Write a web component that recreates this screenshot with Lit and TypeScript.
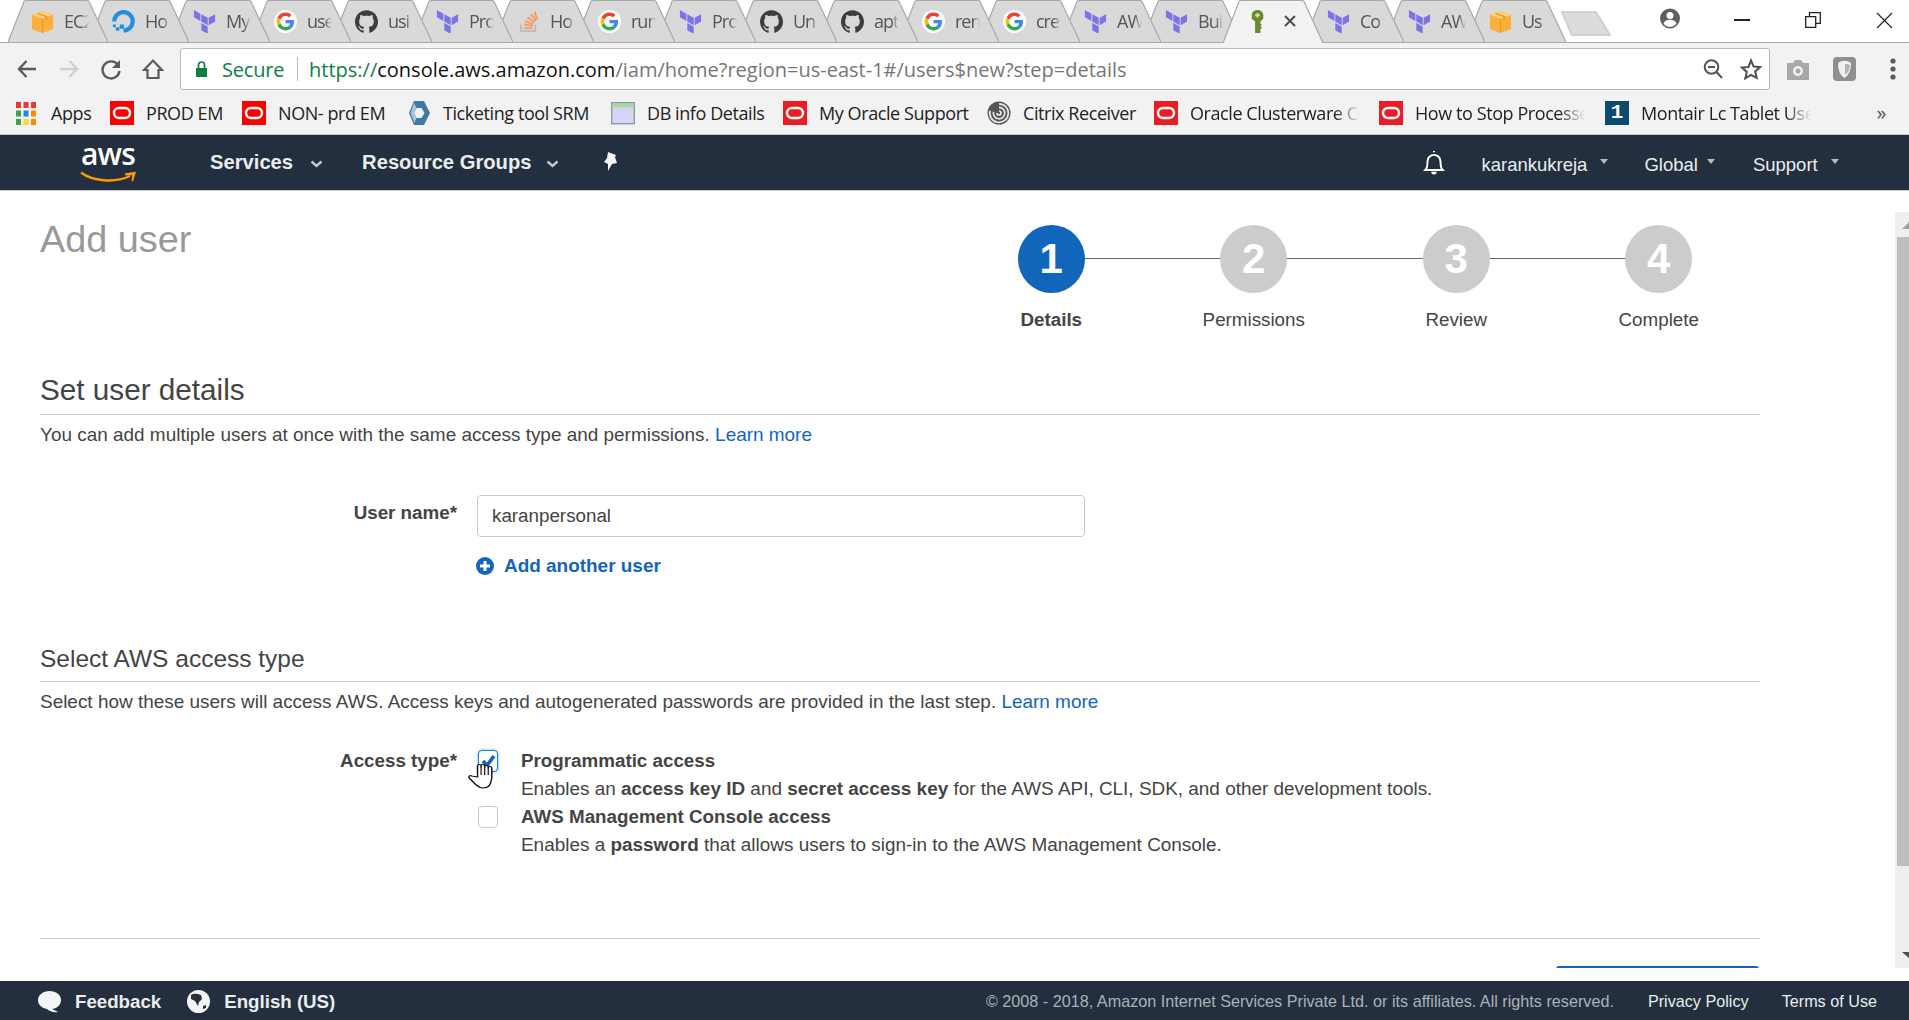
import { LitElement, html, css, svg } from "lit";
import { customElement } from "lit/decorators.js";

const terraform = () => html`<svg class="fav" viewBox="0 0 25 25"><path fill="#7b74e6" d="M1 0v8l7 4V4zM9 4.500v8l7 4v-8zM17 8.500v8l7-4v-8zM9 14v8l7 4v-8z"/></svg>`;
const google = () => html`<svg class="fav" viewBox="-7 -7 62 62"><circle cx="24" cy="24" r="31" fill="#fff"/><path fill="#EA4335" d="M24 9.500c3.540 0 6.710 1.220 9.210 3.600l6.850-6.850C35.900 2.380 30.470 0 24 0 14.620 0 6.510 5.380 2.560 13.220l7.980 6.190C12.430 13.720 17.740 9.500 24 9.500z"/><path fill="#4285F4" d="M46.980 24.550c0-1.570-.15-3.090-.38-4.550H24v9.020h12.940c-.58 2.960-2.260 5.480-4.780 7.180l7.730 6c4.510-4.180 7.090-10.360 7.090-17.650z"/><path fill="#FBBC05" d="M10.530 28.590c-.48-1.450-.76-2.990-.76-4.590s.27-3.140.76-4.590l-7.980-6.190C.92 16.460 0 20.120 0 24c0 3.880.92 7.540 2.560 10.780l7.970-6.190z"/><path fill="#34A853" d="M24 48c6.480 0 11.930-2.130 15.890-5.810l-7.730-6c-2.150 1.450-4.920 2.300-8.160 2.300-6.260 0-11.570-4.220-13.470-9.910l-7.980 6.190C6.510 42.620 14.620 48 24 48z"/></svg>`;
const github = () => html`<svg class="fav" viewBox="0 0 24 24"><path fill="#3d3d3d" d="M12 .297c-6.630 0-12 5.373-12 12 0 5.303 3.438 9.800 8.205 11.385.6.113.82-.258.82-.577 0-.285-.01-1.040-.015-2.040-3.338.724-4.042-1.610-4.042-1.610C4.422 18.070 3.633 17.700 3.633 17.700c-1.087-.744.084-.729.084-.729 1.205.084 1.838 1.236 1.838 1.236 1.070 1.835 2.809 1.305 3.495.998.108-.776.417-1.305.76-1.605-2.665-.3-5.466-1.332-5.466-5.930 0-1.310.465-2.380 1.235-3.220-.135-.303-.54-1.523.105-3.176 0 0 1.005-.322 3.300 1.230.96-.267 1.980-.399 3-.405 1.020.006 2.040.138 3 .405 2.280-1.552 3.285-1.230 3.285-1.230.645 1.653.24 2.873.12 3.176.765.84 1.230 1.910 1.230 3.220 0 4.610-2.805 5.625-5.475 5.920.42.36.81 1.096.81 2.220 0 1.606-.015 2.896-.03 3.286 0 .315.21.69.825.57C20.565 22.092 24 17.592 24 12.297c0-6.627-5.373-12-12-12"/></svg>`;
const awsBox = () => html`<svg class="fav" viewBox="0 0 24 24"><path fill="#fbb03b" d="M12 1 1 5v15l11 4 11-4V5z"/><path fill="#fdd27f" d="M12 1 1 5l11 4 11-4z"/><path fill="#e89a2c" d="M11.400 9h1.200v15h-1.200zM8 3l9 3.600v3l-2 .7V7.400L6 4z"/></svg>`;
const ocean = () => html`<svg class="fav" viewBox="0 0 24 24"><path fill="none" stroke="#1f8fe8" stroke-width="4.400" d="M12 21.400A9.600 9.600 0 1 0 2.400 12"/><path fill="#1f8fe8" d="M8 15h4.500v4.500H8zM4 18h3.600v3.600H4zM1 15h3v3H1z"/></svg>`;
const stack = () => html`<svg class="fav" viewBox="0 0 24 24"><path fill="none" stroke="#bcbbbb" stroke-width="2" d="M4 15v7h15v-7"/><path stroke="#f4a064" stroke-width="2.200" d="M7 19h9M7.400 15.200l9 1.400M8.600 11.400l8.300 3.400M11 7.600l7.400 5.200M14.400 4.400l5.400 7M18.400 2l2.600 8"/></svg>`;
const keyIcon = () => html`<svg class="fav" viewBox="0 0 24 24"><path fill="#6c8a2a" d="M6 5a6 5 0 0 1 12 0v4l-3 3v2l1.600 1.400-1.600 1.400 1.600 1.600-1.600 1.600V24H9.500V12L6 9z"/><path fill="#d6e3a8" d="M11 3h2v1.400h1.400v2H13v1.400h-2V6.400H9.600v-2H11z"/></svg>`;

interface Tab { icon: () => unknown; text: string; active?: boolean }
const tabs: Tab[] = [
  { icon: awsBox, text: "EC2" }, { icon: ocean, text: "Ho" }, { icon: terraform, text: "My" },
  { icon: google, text: "use" }, { icon: github, text: "usi" }, { icon: terraform, text: "Pro" },
  { icon: stack, text: "Ho" }, { icon: google, text: "run" }, { icon: terraform, text: "Pro" },
  { icon: github, text: "Un" }, { icon: github, text: "apt" }, { icon: google, text: "ren" },
  { icon: google, text: "cre" }, { icon: terraform, text: "AW" }, { icon: terraform, text: "Bui" },
  { icon: keyIcon, text: "", active: true }, { icon: terraform, text: "Co" }, { icon: terraform, text: "AW" },
  { icon: awsBox, text: "Us" },
];

const oracle = (bg: string) => html`<svg class="bm-ic" viewBox="0 0 24 24"><rect width="24" height="24" fill=${bg}/><rect x="4" y="7" width="16" height="10" rx="5" fill="none" stroke="#fff" stroke-width="2.400"/></svg>`;
const appsIcon = html`<svg class="bm-ic small" viewBox="0 0 20 24">${[["#e53935","#e53935","#e53935"],["#43a047","#1e88e5","#fb8c00"],["#43a047","#fdd835","#fb8c00"]].map((r, y) => r.map((c, x) => svg`<rect x=${x * 7.5} y=${y * 8.5 + 1} width="5" height="6" fill=${c}/>`))}</svg>`;
const hexIcon = html`<svg class="bm-ic" viewBox="0 0 24 24"><path fill="#3f7ba0" d="M7 0h10l6 12-6 12H7L2 12z"/><path fill="#f2f2f2" d="M9.500 7h5l3 5-3 5h-5l-2.500-5z"/><path fill="#a9c7d9" d="M7 2 3.500 12 7.500 22l2-5-2.500-5 2.500-5z"/></svg>`;
const dbIcon = html`<svg class="bm-ic" viewBox="0 0 24 24"><rect x=".7" y="1.700" width="22.600" height="21" fill="#d5d5f5" stroke="#8f9a9a" stroke-width="1.400"/><rect x="1.400" y="2.400" width="21.200" height="4" fill="#a7d7a2"/></svg>`;
const citrixIcon = html`<svg class="bm-ic" viewBox="0 0 24 24"><circle cx="12" cy="12" r="11.500" fill="#555"/><path fill="none" stroke="#e8e8e8" stroke-width="1.700" d="M12 2.800a9.300 9.300 0 1 1-9 7M12 6.400a5.700 5.700 0 1 1-5.500 4.400M12 10a2 2 0 1 1-2 2"/></svg>`;

const bookmarks = [
  { ic: appsIcon, t: "Apps", x: 16, w: 40 },
  { ic: oracle("#ff0000"), t: "PROD EM", x: 110, w: 76 },
  { ic: oracle("#ff0000"), t: "NON- prd EM", x: 242, w: 109 },
  { ic: hexIcon, t: "Ticketing tool SRM", x: 407, w: 149 },
  { ic: dbIcon, t: "DB info Details", x: 611, w: 116 },
  { ic: oracle("#ed1c24"), t: "My Oracle Support", x: 783, w: 149 },
  { ic: citrixIcon, t: "Citrix Receiver", x: 987, w: 112 },
  { ic: oracle("#ed1c24"), t: "Oracle Clusterware Console", x: 1154, w: 170, fade: true },
  { ic: oracle("#ed1c24"), t: "How to Stop Processes", x: 1379, w: 170, fade: true },
  { ic: html`<span class="montair">1</span>`, t: "Montair Lc Tablet User", x: 1605, w: 170, fade: true },
];

const caret = html`<svg class="chev" viewBox="0 0 12 8"><path fill="none" stroke="#c4c8cc" stroke-width="2.400" d="M1 1.500 6 6l5-4.500"/></svg>`;

@customElement("app-root")
export class AppRoot extends LitElement {
  static styles = css`
    :host { display: flex; flex-direction: column; width: 1909px; height: 1020px; overflow: hidden; background: #fff; font-family: "Liberation Sans", Arial, sans-serif; color: #444; }

    .tabstrip { display: flex; align-items: flex-start; height: 42px; padding-left: 8px; border-bottom: 1px solid #a9a9a9; position: relative; flex: none; z-index: 1; }
    .tab { position: relative; width: 81px; height: 42px; flex: none; display: flex; align-items: center; gap: 10px; padding-left: 23px; box-sizing: border-box; font-family: "Open Sans", sans-serif; font-size: 18px; letter-spacing: -1px; color: #555; }
    .tab > .shape { position: absolute; left: 0; top: 0; width: 100px; height: 43px; }
    .fav { width: 23px; height: 23px; flex: none; position: relative; }
    .tab-t { width: 25px; overflow: hidden; white-space: nowrap; flex: none; position: relative; -webkit-mask-image: linear-gradient(90deg, #000 70%, transparent); mask-image: linear-gradient(90deg, #000 70%, transparent); }
    .tab-x { position: relative; width: 12px; height: 12px; margin-left: 5px; flex: none; }
    .newtab { width: 50px; height: 26px; margin: 10px 0 0 14px; flex: none; }
    .winctl { position: absolute; top: 0; right: 0; height: 42px; display: flex; align-items: flex-start; }
    .profile { width: 20px; height: 21px; margin: 8px 54px 0 0; }
    .wmin { width: 16px; height: 2px; background: #222; margin: 19px 55px 0 0; }
    .wmax { width: 16px; height: 16px; margin: 12px 55px 0 0; }
    .wclose { width: 17px; height: 17px; margin: 12px 16px 0 0; }

    .toolbar { height: 47px; flex: none; background: #f2f2f2; display: flex; align-items: center; box-sizing: border-box; padding: 5px 0 0 16px; }
    .tbtn { width: 22px; height: 22px; flex: none; margin-right: 20px; }
    .omni { width: 1590px; height: 42px; margin-left: -4px; box-sizing: border-box; background: #fff; border: 1px solid #b8b8b8; border-radius: 3px; display: flex; align-items: center; padding: 0 0 0 14px; font-family: "Open Sans", sans-serif; font-size: 20px; flex: none; }
    .lock { width: 13px; height: 16px; margin-right: 14px; flex: none; }
    .secure { color: #0b8043; width: 75px; flex: none; letter-spacing: -.2px; }
    .sep { width: 1px; height: 24px; background: #bbb; margin-right: 11px; flex: none; }
    .url { color: #767676; flex: 1; white-space: nowrap; }
    .url b { font-weight: 400; color: #111; }
    .url i { font-style: normal; color: #0b8043; }
    .omni svg.r { width: 20px; height: 22px; margin-right: 17px; flex: none; }
    .omni svg.star { width: 22px; margin-right: 7px; }
    .ext { width: 24px; height: 24px; margin-left: 16px; flex: none; }
    .ext2 { width: 23px; height: 24px; margin-left: 23px; flex: none; }
    .dots { width: 6px; height: 22px; margin-left: 34px; flex: none; }

    .bookmarks { height: 45px; flex: none; position: relative; background: #f2f2f2; border-bottom: 1px solid #c8c8c8; box-sizing: border-box; font-family: "Open Sans", sans-serif; font-size: 18px; letter-spacing: -.42px; color: #222; display: flex; align-items: center; padding-top: 1px; }
    .bm { display: flex; align-items: center; gap: 12px; flex: none; }
    .bm-ic { width: 24px; height: 24px; flex: none; }
    .bm-ic.small { width: 20px; margin-right: 3px; }
    .bm-t { white-space: nowrap; flex: none; }
    .bm-t.fade { overflow: hidden; -webkit-mask-image: linear-gradient(90deg, #000 85%, transparent); mask-image: linear-gradient(90deg, #000 85%, transparent); }
    .montair { width: 24px; height: 24px; flex: none; background: #0d4a6b; color: #fff; font: bold 21px/24px "Liberation Mono", monospace; text-align: center; letter-spacing: 0; }
    .more { position: absolute; right: 23px; top: 9px; font-size: 20px; color: #555; }

    .nav { height: 55px; flex: none; background: #232f3e; color: #fff; display: flex; align-items: center; position: relative; }
    .logo { width: 58px; margin-left: 80px; height: 40px; flex: none; position: relative; }
    .logo span { position: absolute; left: 1px; top: -9px; font: 600 30px/40px "Open Sans", sans-serif; letter-spacing: -.8px; }
    .logo svg { position: absolute; left: 0; top: 28px; width: 57px; height: 13px; }
    .menu { font-weight: 700; font-size: 20.200px; color: #eaeded; margin-top: -1px; }
    .chev { width: 13px; height: 8px; flex: none; margin-top: 3px; }
    .services { margin-left: 72px; }
    .groups { margin-left: 39px; }
    .cgap1 { margin-left: 17px; }
    .cgap2 { margin-left: 15px; }
    .pin { width: 17px; height: 20px; margin: -3px 0 0 44px; flex: none; }
    .bell { width: 22px; height: 26px; margin: 0 0 0 803px; flex: none; }
    .nr { font-size: 18.500px; color: #eaeded; margin-top: 4px; }
    .user { margin-left: 36px; }
    .glob { margin-left: 36px; }
    .supp { margin-left: 38px; }
    .tri { width: 0; height: 0; border: 4.500px solid transparent; border-top: 5px solid #b8bcc0; border-bottom: 0; flex: none; margin: 0 0 2px 13px; }
    .glob + .tri { margin-left: 9px; }

    .mainwrap { height: 778px; flex: none; display: flex; border-top: 1px solid #ccc; box-sizing: border-box; }
    .content { width: 1720px; margin-left: 40px; height: 100%; overflow: hidden; flex: none; }
    .spacer { width: 135px; flex: none; }
    .scroll { width: 14px; flex: none; margin-top: 21px; background: #efefef; position: relative; overflow: hidden; }
    .sthumb { position: absolute; left: 2px; right: 0; top: 25px; height: 629px; background: #bdbdbd; }
    .sup, .sdown { position: absolute; left: 7px; width: 0; height: 0; border: 7px solid transparent; }
    .sup { top: 10px; border-bottom: 7px solid #a3a3a3; border-top: 0; }
    .sdown { bottom: 10px; border-top: 6px solid #505050; border-bottom: 0; }
    .bottomgap { height: 13px; flex: none; }

    .head { display: flex; justify-content: space-between; align-items: flex-start; }
    h1 { margin: 26px 0 0; font-weight: 400; font-size: 37.800px; line-height: 44px; color: #999; }
    .stepper { display: flex; padding-top: 34px; width: 810px; }
    .step { width: 202.500px; display: flex; flex-direction: column; align-items: center; position: relative; flex: none; }
    .step:not(:last-child)::before { content: ""; position: absolute; left: 50%; width: 100%; top: 33px; height: 1px; background: #666; }
    .num { position: relative; width: 67px; height: 68px; border-radius: 50%; background: #ccc; color: #fff; font-weight: 700; font-size: 42px; line-height: 68px; text-align: center; }
    .step.on .num { background: #1166bb; }
    .lbl { margin-top: 16px; font-size: 18.800px; line-height: 22px; }
    .step.on .lbl { font-weight: 700; }

    h2, h3 { font-weight: 400; margin: 0; border-bottom: 1px solid #ccc; color: #444; }
    h2 { margin-top: 41px; font-size: 29.700px; line-height: 36px; padding-bottom: 6px; }
    h3 { margin-top: 66px; font-size: 24.500px; line-height: 30px; padding-bottom: 7px; }
    p { margin: 7.500px 0 0; font-size: 18.950px; line-height: 24px; color: #444; }
    h3 + p { margin-top: 8.500px; }
    a { color: #1166bb; text-decoration: none; }

    .form { display: grid; grid-template-columns: 417px 1fr; column-gap: 20px; margin-top: 48px; }
    .flabel { text-align: right; font-weight: 700; font-size: 18.800px; line-height: 24px; padding-top: 6px; }
    .input { width: 608px; height: 42px; box-sizing: border-box; border: 1px solid #c8c8c8; border-radius: 4px; padding: 0 14px; display: flex; align-items: center; font-size: 18.800px; color: #444; }
    .addmore { display: flex; align-items: center; gap: 10px; margin-top: 17px; font-weight: 700; font-size: 18.950px; line-height: 24px; color: #1166bb; margin-left: -1px; }
    .addmore svg { width: 18px; height: 18px; flex: none; }

    .access { display: grid; grid-template-columns: 417px 1fr; column-gap: 20px; margin-top: 32.500px; }
    .alabel { text-align: right; font-weight: 700; font-size: 18.800px; line-height: 28px; }
    .opt { display: grid; grid-template-columns: 44px 1fr; position: relative; }
    .opt-lines { font-size: 18.930px; line-height: 28px; }
    .opt-lines strong { font-weight: 700; }
    .opt-lines .t { font-weight: 700; font-size: 18.800px; }
    .cb { width: 20px; height: 22px; box-sizing: border-box; margin: 3px 0 0 1px; border: 1px solid #c8c8c8; border-radius: 4px; background: #fff; }
    .cb.on { border-color: #1e7fd6; box-shadow: 0 0 3px #5aa9ee; padding: 1px; }
    .cb.on svg { width: 16px; height: 18px; display: block; }
    .hand { position: absolute; left: -9px; top: 16px; width: 25px; height: 26px; }

    .rule { border-top: 1px solid #ccc; margin-top: 79.500px; }
    .btnrow { display: flex; justify-content: flex-end; margin-top: 27px; padding-right: 1px; }
    .btn { width: 203px; height: 40px; border-radius: 3px; background: #1166bb; color: #fff; text-align: center; line-height: 40px; font-size: 18px; font-weight: 700; }

    .footer { height: 39px; flex: none; background: #232f3e; display: flex; align-items: center; color: #eaeded; font-size: 16.200px; padding-top: 2px; box-sizing: border-box; }
    .f-l { font-weight: 700; font-size: 18.700px; margin-left: 14px; }
    .f-ic { width: 23px; height: 23px; flex: none; }
    .fb { margin-left: 38px; }
    .gl { margin-left: 26px; }
    .copy { color: #aab2b8; margin-left: auto; }
    .pp { margin-left: 34px; }
    .tu { margin-left: 33px; margin-right: 32px; }
  `;

  private tabBg(active: boolean) {
    return html`<svg class="shape" viewBox="0 0 100 43"><path d="M0 ${active ? 43 : 42}L16 1.500Q16.500 .5 18 .5H79Q80.500 .5 81 1.500L100 ${active ? 43 : 42}" fill=${active ? "#f2f2f2" : "#d9d9d9"} stroke="#a9a9a9" stroke-width="1.200"/></svg>`;
  }

  render() {
    return html`
      <div class="tabstrip">
        ${tabs.map((t, i) => html`
          <div class="tab" style="z-index:${t.active ? 50 : 40 - i}">
            ${this.tabBg(!!t.active)}
            ${t.icon()}
            ${t.active
              ? html`<svg class="tab-x" viewBox="0 0 12 12"><path stroke="#4d4d4d" stroke-width="2" d="M1 1l10 10M11 1 1 11"/></svg>`
              : html`<span class="tab-t">${t.text}</span>`}
          </div>`)}
        <svg class="newtab" viewBox="0 0 50 26"><path d="M1 2h34l14 23H11z" fill="#dcdcdc" stroke="#d0d0d0" stroke-linejoin="round" stroke-width="2"/></svg>
        <div class="winctl">
          <svg class="profile" viewBox="0 0 20 21"><circle cx="10" cy="10.500" r="10" fill="#5f5f5f"/><circle cx="10" cy="7.500" r="3.500" fill="#fff"/><path fill="#fff" d="M3.500 15.500c1-3 4-3.800 6.500-3.800s5.500.8 6.500 3.800a8 8 0 0 1-13 0z"/></svg>
          <div class="wmin"></div>
          <svg class="wmax" viewBox="0 0 16 16"><path fill="none" stroke="#222" stroke-width="1.300" d="M.7 4.700h10v10.600H.7zM4.500 4.500V.7h10.800v10.600h-4"/></svg>
          <svg class="wclose" viewBox="0 0 17 17"><path stroke="#222" stroke-width="1.200" d="M1 1l15 15M16 1 1 16"/></svg>
        </div>
      </div>

      <div class="toolbar">
        <svg class="tbtn" viewBox="0 0 22 22"><path fill="none" stroke="#5a5a5a" stroke-width="2.400" d="M20 11H3M10.500 3 3 11l7.500 8"/></svg>
        <svg class="tbtn" viewBox="0 0 22 22"><path fill="none" stroke="#cfcfcf" stroke-width="2.400" d="M2 11h17M11.500 3 19 11l-7.500 8"/></svg>
        <svg class="tbtn" viewBox="0 0 22 22"><path fill="none" stroke="#5a5a5a" stroke-width="2.400" d="M18 7a8.500 8.500 0 1 0 1.500 6"/><path fill="#5a5a5a" d="M20 2v8h-8z"/></svg>
        <svg class="tbtn" viewBox="0 0 22 22"><path fill="none" stroke="#5a5a5a" stroke-width="2.200" d="M2 12 11 2.500 20 12h-3.500v8h-11v-8z"/></svg>
        <div class="omni">
          <svg class="lock" viewBox="0 0 13 16"><path fill="#0b8043" d="M1 7h11v9H1z"/><path fill="none" stroke="#0b8043" stroke-width="1.700" d="M3.500 7V4a3 3 0 0 1 6 0v3"/></svg>
          <span class="secure">Secure</span><span class="sep"></span>
          <span class="url"><i>https://</i><b>console.aws.amazon.com</b>/iam/home?region=us-east-1#/users$new?step=details</span>
          <svg class="r" viewBox="0 0 20 22"><circle cx="8.500" cy="9" r="6.800" fill="none" stroke="#555" stroke-width="2"/><path stroke="#555" stroke-width="2" d="M5 9h7M13.500 14l5.500 6"/></svg>
          <svg class="r star" viewBox="0 0 22 22"><path fill="none" stroke="#4d4d4d" stroke-width="2" d="m11 2.500 2.600 6.100 6.600.5-5 4.300 1.500 6.400L11 16.900l-5.700 3.400 1.500-6.400-5-4.300 6.600-.5z"/></svg>
        </div>
        <svg class="ext" viewBox="0 0 24 24"><path fill="#a8a8a8" d="M1 6h6l2-3h6l2 3h6v17H1z"/><circle cx="12" cy="14" r="5" fill="#f2f2f2"/><circle cx="12" cy="14" r="2.500" fill="#a8a8a8"/></svg>
        <svg class="ext2" viewBox="0 0 23 24"><rect width="23" height="24" rx="4" fill="#8f8f8f"/><path fill="#f0f0f0" d="M5 6c4-3 9-3 13 0 0 7-2 12-6.500 15C7 18 5 13 5 6z"/><path fill="#b5b5b5" d="M12 7c2 0 4 .5 5 1 0 4-2 8-5 10z"/></svg>
        <svg class="dots" viewBox="0 0 6 22"><circle cx="3" cy="3" r="2.600" fill="#5a5a5a"/><circle cx="3" cy="11" r="2.600" fill="#5a5a5a"/><circle cx="3" cy="19" r="2.600" fill="#5a5a5a"/></svg>
      </div>

      <div class="bookmarks">
        ${bookmarks.map((b, i) => html`
          <div class="bm" style="margin-left:${i === 0 ? b.x : b.x - bookmarks[i - 1].x - bookmarks[i - 1].w - (i === 1 ? 35 : 36)}px">
            ${b.ic}<span class="bm-t ${b.fade ? "fade" : ""}" style="width:${b.w}px">${b.t}</span>
          </div>`)}
        <span class="more">»</span>
      </div>

      <div class="nav">
        <div class="logo"><span>aws</span>
          <svg viewBox="0 0 57 13"><path fill="none" stroke="#f90" stroke-width="2.400" d="M1 1.500C12 10 34 12.500 50 5"/><path fill="#f90" d="M45 2.200 56 .7l-3 10-1.500-1 .8-5.500-7 .3z"/></svg>
        </div>
        <span class="menu services">Services</span>
        <span class="cgap1">${caret}</span>
        <span class="menu groups">Resource Groups</span>
        <span class="cgap2">${caret}</span>
        <svg class="pin" viewBox="0 0 17 20"><path fill="#f4f4f4" d="M5 1l8 3-1 2 2 6-5 1-4 7 0-7-4-2 3-4z"/></svg>
        <svg class="bell" viewBox="0 0 20 24"><path fill="none" stroke="#fff" stroke-width="1.800" d="M2 18.500c2-2 2-4 2-8a6 6 0 0 1 12 0c0 4 0 6 2 8zM10 2V1"/><path fill="#fff" d="M7.500 20h5a2.500 2.500 0 0 1-5 0z"/></svg>
        <span class="nr user">karankukreja</span><span class="tri"></span>
        <span class="nr glob">Global</span><span class="tri"></span>
        <span class="nr supp">Support</span><span class="tri"></span>
      </div>

      <div class="mainwrap">
        <div class="content">
          <div class="head">
            <h1>Add user</h1>
            <div class="stepper">
              ${["Details", "Permissions", "Review", "Complete"].map((s, i) => html`
                <div class="step ${i === 0 ? "on" : ""}"><div class="num">${i + 1}</div><div class="lbl">${s}</div></div>`)}
            </div>
          </div>
          <h2>Set user details</h2>
          <p>You can add multiple users at once with the same access type and permissions. <a>Learn more</a></p>
          <div class="form">
            <div class="flabel">User name*</div>
            <div>
              <div class="input">karanpersonal</div>
              <div class="addmore">
                <svg viewBox="0 0 18 18"><circle cx="9" cy="9" r="9" fill="#1166bb"/><path stroke="#fff" stroke-width="3" d="M9 4v10M4 9h10"/></svg>
                Add another user
              </div>
            </div>
          </div>
          <h3>Select AWS access type</h3>
          <p>Select how these users will access AWS. Access keys and autogenerated passwords are provided in the last step. <a>Learn more</a></p>
          <div class="access">
            <div class="alabel">Access type*</div>
            <div>
              <div class="opt">
                <div class="cb on"><svg viewBox="0 0 16 18"><path fill="none" stroke="#1166bb" stroke-width="3.600" d="M3 9l4 4.500L14 4"/></svg></div>
                <div class="opt-lines"><div class="t">Programmatic access</div><div>Enables an <strong>access key ID</strong> and <strong>secret access key</strong> for the AWS API, CLI, SDK, and other development tools.</div></div>
                <svg class="hand" viewBox="0 0 21 26" preserveAspectRatio="none"><path fill="#fff" stroke="#111" stroke-width="1.200" stroke-linejoin="round" d="M8 14V3a1.500 1.500 0 0 1 3 0v1-1a1.500 1.500 0 0 1 3 0v1a1.500 1.500 0 0 1 3 0v1a1.500 1.500 0 0 1 3 0v10l-1 5c-1 3-3 5-6 5-4 0-5-2-7-4l-5-6c-1-2 1-3 2-2z"/><path stroke="#111" d="M11 4v8M14 4v8M17 5v7"/></svg>
              </div>
              <div class="opt">
                <div class="cb"></div>
                <div class="opt-lines"><div class="t">AWS Management Console access</div><div>Enables a <strong>password</strong> that allows users to sign-in to the AWS Management Console.</div></div>
              </div>
            </div>
          </div>
          <div class="rule"></div>
          <div class="btnrow"><div class="btn">Next: Permissions</div></div>
        </div>
        <div class="spacer"></div>
        <div class="scroll"><div class="sup"></div><div class="sthumb"></div><div class="sdown"></div></div>
      </div>
      <div class="bottomgap"></div>

      <div class="footer">
        <svg class="f-ic fb" viewBox="0 0 23 23"><path fill="#f4f4f4" d="M11.500 1C18 1 23 4.500 23 10s-5 9-9 9l6 3c-4 1-9-1-11-3C4 18 0 15 0 10S5 1 11.500 1z"/></svg>
        <span class="f-l">Feedback</span>
        <svg class="f-ic gl" viewBox="0 0 23 23"><circle cx="11.500" cy="11.500" r="11.500" fill="#f4f4f4"/><path fill="#232f3e" d="M4 5c3-2 6-1 10 0l1 4-3 3-1 4-3-5-4-2zM16 16l3-1 0 3-3 1z"/></svg>
        <span class="f-l">English (US)</span>
        <span class="copy">© 2008 - 2018, Amazon Internet Services Private Ltd. or its affiliates. All rights reserved.</span>
        <span class="pp">Privacy Policy</span>
        <span class="tu">Terms of Use</span>
      </div>
    `;
  }
}
